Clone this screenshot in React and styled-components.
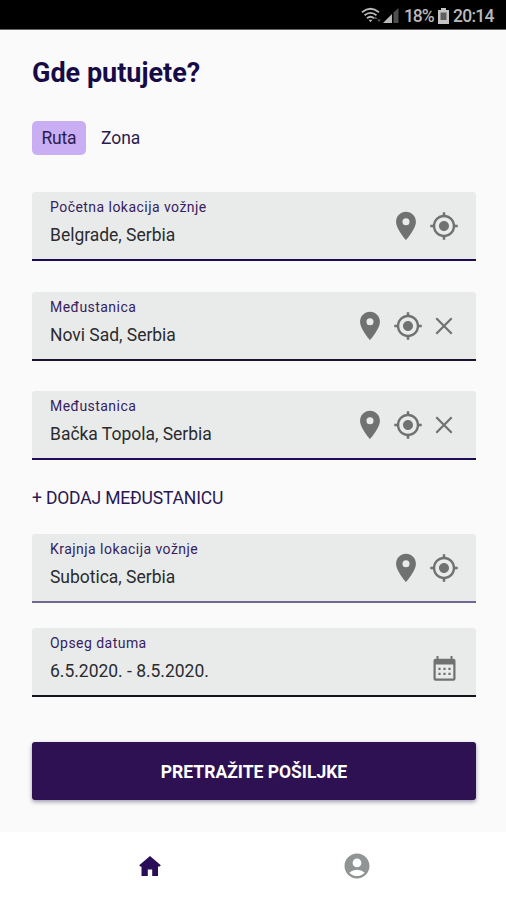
import React from 'react'
import styled, { createGlobalStyle } from 'styled-components'
import { MdPlace, MdMyLocation, MdAccountCircle } from 'react-icons/md'

const GlobalStyle = createGlobalStyle`
    * {
        box-sizing: border-box;
    }

    body {
        margin: 0;
        background: #fafafa;
        font-family: Roboto, "Liberation Sans", sans-serif;
    }

    button {
        border: 0;
        padding: 0;
        background: none;
        font: inherit;
        color: inherit;
    }
`;

const Screen = styled.div`
    display: flex;
    flex-direction: column;
    height: 900px;
    overflow: hidden;
    background: #fafafa;
`;

const StatusBar = styled.header`
    display: flex;
    align-items: center;
    justify-content: flex-end;
    flex: none;
    height: 30px;
    padding: 3px 12px 0 0;
    background: #000;
    border-bottom: 1px solid #666;
    color: #b9b9b9;
    font-size: 17.5px;
    font-weight: 500;
    line-height: 20px;
    white-space: nowrap;

    svg {
        display: block;
    }
`;

const Percent = styled.span`
    width: 29px;
    margin: 0 5px 0 5px;
    letter-spacing: -1.1px;
`;

const Clock = styled.span`
    width: 41px;
    margin-left: 4px;
    letter-spacing: -0.75px;
`;

const Main = styled.main`
    flex: 1;
    display: flex;
    flex-direction: column;
    align-items: stretch;
    padding: 26px 30px 0 32px;
`;

const Title = styled.h1`
    margin: 0;
    color: #170b47;
    font-size: 27px;
    font-weight: 700;
    line-height: 34px;
`;

const Tabs = styled.div`
    display: flex;
    gap: 5px;
    margin-top: 31px;
`;

const Tab = styled.button`
    height: 34px;
    padding: 1px 10px 0 9.5px;
    border-radius: 5px;
    background: ${(props) => (props.$active ? '#c9aef3' : 'transparent')};
    color: #2c1b4e;
    font-size: 17.5px;
    line-height: 33px;
    letter-spacing: ${(props) => (props.$active ? '-0.2px' : '0')};
`;

const Field = styled.div`
    display: flex;
    justify-content: space-between;
    width: 444px;
    height: 69px;
    margin-top: ${(props) => props.$gap}px;
    padding: 0 ${(props) => props.$end}px 0 18px;
    background: #e9ebeb;
    border-bottom: 2px solid ${(props) => props.$line};
    border-radius: 3px 3px 0 0;
`;

const FieldText = styled.div`
    padding-top: 6px;
    white-space: nowrap;
`;

const Label = styled.div`
    color: #36215f;
    font-size: 14px;
    line-height: 18px;
    letter-spacing: 0.46px;
`;

const Value = styled.div`
    margin-top: 8px;
    color: #2b2b2e;
    font-size: 17.5px;
    line-height: 22px;
    letter-spacing: -0.02px;
`;

const Actions = styled.div`
    display: flex;
    align-items: center;
    color: #707171;
`;

const Action = styled.button`
    display: flex;
    align-items: center;
    justify-content: center;
    width: ${(props) => props.$width || 38}px;
    height: 100%;
    padding-top: ${(props) => props.$drop || 0}px;

    svg {
        flex: none;
    }
`;

const AddStop = styled.button`
    align-self: flex-start;
    margin-top: 26px;
    color: #291750;
    font-size: 17.5px;
    line-height: 24px;
    letter-spacing: -0.17px;
    white-space: nowrap;
`;

const Submit = styled.button`
    width: 444px;
    height: 58px;
    margin-top: 45px;
    padding-top: 1px;
    border-radius: 3px;
    background: #2d1152;
    box-shadow: 0 2px 4px rgba(30, 15, 60, 0.4);
    color: #fff;
    font-size: 17.5px;
    font-weight: 700;
    line-height: 58px;
`;

const BottomNav = styled.nav`
    display: flex;
    flex: none;
    justify-content: center;
    height: 68px;
    background: #fff;
`;

const NavItem = styled.button`
    display: flex;
    justify-content: center;
    align-items: center;
    width: 207px;
    color: ${(props) => (props.$active ? '#2a0d59' : '#919494')};
`;

const WifiIcon = () => (
    <svg width="22" height="18" viewBox="0 0 22 18" fill="none" stroke="#b9b9b9" strokeWidth="1.8">
        <path d="M1 5.2Q9.5 -1.6 18 5.2" />
        <path d="M3.5 8.3Q9.5 3.5 15.5 8.3" />
        <path d="M6 11.2Q9.5 8.4 13 11.2" />
        <path d="M7.5 12.7h4L9.5 15.2z" fill="#b9b9b9" stroke="none" />
        <path d="M12.5 12l2-2.5 2 2.5zM16 12.5l2 2.5 2-2.5z" fill="#555" stroke="none" />
    </svg>
);

const SignalIcon = () => (
    <svg width="16" height="16" viewBox="0 0 16 16">
        <path d="M0 15L9 6v9z" fill="#b9b9b9" />
        <path d="M10.5 4.5L15.5 0v15h-5z" fill="#4e4e4e" />
    </svg>
);

const BatteryIcon = () => (
    <svg width="11" height="16" viewBox="0 0 11 16">
        <path d="M3 0h5v2h3v14H0V2h3z" fill="#c4c4c4" />
        <path d="M2.5 4.5h6V12h-6z" fill="#5f5f5f" />
    </svg>
);

const CloseIcon = () => (
    <svg width="18" height="18" viewBox="0 0 18 18" fill="none" stroke="currentColor" strokeWidth="2.2">
        <path d="M1.3 1.3l15.4 15.4M16.7 1.3L1.3 16.7" />
    </svg>
);

const CalendarIcon = () => (
    <svg width="23" height="25" viewBox="0 0 23 25" fill="currentColor">
        <path
            fillRule="evenodd"
            d="M3.5 0h2v2.8h12V0h2v2.8h1A2 2 0 0 1 22.5 4.8v18a2 2 0 0 1-2 2h-18a2 2 0 0 1-2-2v-18a2 2 0 0 1 2-2h1zM2.7 8.5v14h17.6v-14z"
        />
        <path d="M5.4 11.7h2.2v2.2H5.4zM10.4 11.7h2.2v2.2h-2.2zM15.4 11.7h2.2v2.2h-2.2zM5.4 16.7h2.2v2.2H5.4zM10.4 16.7h2.2v2.2h-2.2zM15.4 16.7h2.2v2.2h-2.2z" />
    </svg>
);

const HomeIcon = () => (
    <svg width="22" height="20" viewBox="0 0 22 20" fill="currentColor">
        <path d="M11 0l10.8 9.2-1.1 1.3H19V20h-5.8v-6.5H8.8V20H2.5v-9.5H1.3L.2 9.2z" />
    </svg>
);

const LocationField = ({ label, value, gap, line, removable }) => (
    <Field $gap={gap} $line={line} $end={removable ? 15 : 13}>
        <FieldText>
            <Label>{label}</Label>
            <Value>{value}</Value>
        </FieldText>
        <Actions>
            <Action><MdPlace size={34} /></Action>
            <Action $drop={1}><MdMyLocation size={30} /></Action>
            {removable && <Action $width={34} $drop={1}><CloseIcon /></Action>}
        </Actions>
    </Field>
);

const App = () => (
    <>
        <GlobalStyle />
        <Screen>
            <StatusBar>
                <WifiIcon />
                <SignalIcon />
                <Percent>18%</Percent>
                <BatteryIcon />
                <Clock>20:14</Clock>
            </StatusBar>
            <Main>
                <Title>Gde putujete?</Title>
                <Tabs>
                    <Tab $active>Ruta</Tab>
                    <Tab>Zona</Tab>
                </Tabs>
                <LocationField label="Početna lokacija vožnje" value="Belgrade, Serbia" gap={37} line="#1d0c55" />
                <LocationField label="Međustanica" value="Novi Sad, Serbia" gap={31} line="#1c112f" removable />
                <LocationField label="Međustanica" value="Bačka Topola, Serbia" gap={30} line="#1d0c55" removable />
                <AddStop>+ DODAJ MEĐUSTANICU</AddStop>
                <LocationField label="Krajnja lokacija vožnje" value="Subotica, Serbia" gap={24} line="#716790" />
                <Field $gap={25} $line="#15121b" $end={13}>
                    <FieldText>
                        <Label>Opseg datuma</Label>
                        <Value>6.5.2020. - 8.5.2020.</Value>
                    </FieldText>
                    <Actions>
                        <Action $drop={14}><CalendarIcon /></Action>
                    </Actions>
                </Field>
                <Submit>PRETRAŽITE POŠILJKE</Submit>
            </Main>
            <BottomNav>
                <NavItem $active><HomeIcon /></NavItem>
                <NavItem><MdAccountCircle size={30} /></NavItem>
            </BottomNav>
        </Screen>
    </>
);

export default App
